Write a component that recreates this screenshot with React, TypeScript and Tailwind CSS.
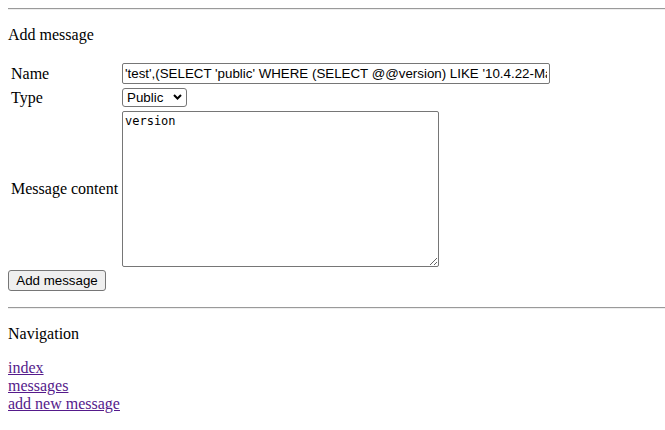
import React from "react";

const nameValue =
  "'test',(SELECT 'public' WHERE (SELECT @@version) LIKE '10.4.22-MariaDB%')) -- ";

export default function App() {
  return (
    <div className="min-h-screen bg-white pl-2 pt-2 font-['Liberation_Serif',serif] text-base leading-[18px] text-black">
      <hr className="border-0 border-t border-b border-t-[#9a9a9a] border-b-[#eeeeee]" />

      <p className="mt-4">Add message</p>

      <form className="mt-4" onSubmit={(e) => e.preventDefault()}>
        <div className="grid w-max grid-cols-[109px_auto] gap-[2px] p-[2px]">
          <div className="flex items-center whitespace-nowrap p-[1px]">Name</div>
          <div className="p-[1px]">
            <input
              type="text"
              defaultValue={nameValue}
              className="block h-[21px] w-[428px] rounded-[2px] border border-[#767676] px-[2px] py-[1px] font-['Liberation_Sans',Arial,sans-serif] text-[13.33px] leading-[15px] outline-none"
            />
          </div>

          <div className="flex items-center whitespace-nowrap p-[1px]">Type</div>
          <div className="p-[1px]">
            <div className="relative w-[65px]">
              <select
                defaultValue="public"
                className="block h-[19px] w-[65px] appearance-none rounded-[3px] border border-[#767676] bg-white pl-[4px] font-['Liberation_Sans',Arial,sans-serif] text-[13.33px] leading-[15px] outline-none"
              >
                <option value="public">Public</option>
                <option value="private">Private</option>
              </select>
              <svg
                className="pointer-events-none absolute right-[5px] top-[6px]"
                width="9"
                height="6"
                viewBox="0 0 9 6"
                fill="none"
              >
                <path d="M1 1 L4.5 4.5 L8 1" stroke="#000" strokeWidth="2" />
              </svg>
            </div>
          </div>

          <div className="flex items-center whitespace-nowrap p-[1px]">Message content</div>
          <div className="p-[1px]">
            <textarea
              defaultValue="version"
              className="block h-[156px] w-[317px] resize rounded-[2px] border border-[#767676] p-[2px] font-['DejaVu_Sans_Mono','Liberation_Mono',monospace] text-[12px] leading-[15px] outline-none"
            />
          </div>
        </div>

        <button
          type="submit"
          className="block h-[21px] w-[98px] rounded-[3px] border border-[#767676] bg-[#efefef] font-['Liberation_Sans',Arial,sans-serif] text-[13.33px] leading-[15px]"
        >
          Add message
        </button>
      </form>

      <hr className="mt-4 border-0 border-t border-b border-t-[#9a9a9a] border-b-[#eeeeee]" />

      <p className="mt-4">Navigation</p>

      <div className="mt-4 flex flex-col items-start">
        <a href="#" className="text-[#551a8b] underline">
          index
        </a>
        <a href="#" className="text-[#551a8b] underline">
          messages
        </a>
        <a href="#" className="text-[#551a8b] underline">
          add new message
        </a>
      </div>
    </div>
  );
}
